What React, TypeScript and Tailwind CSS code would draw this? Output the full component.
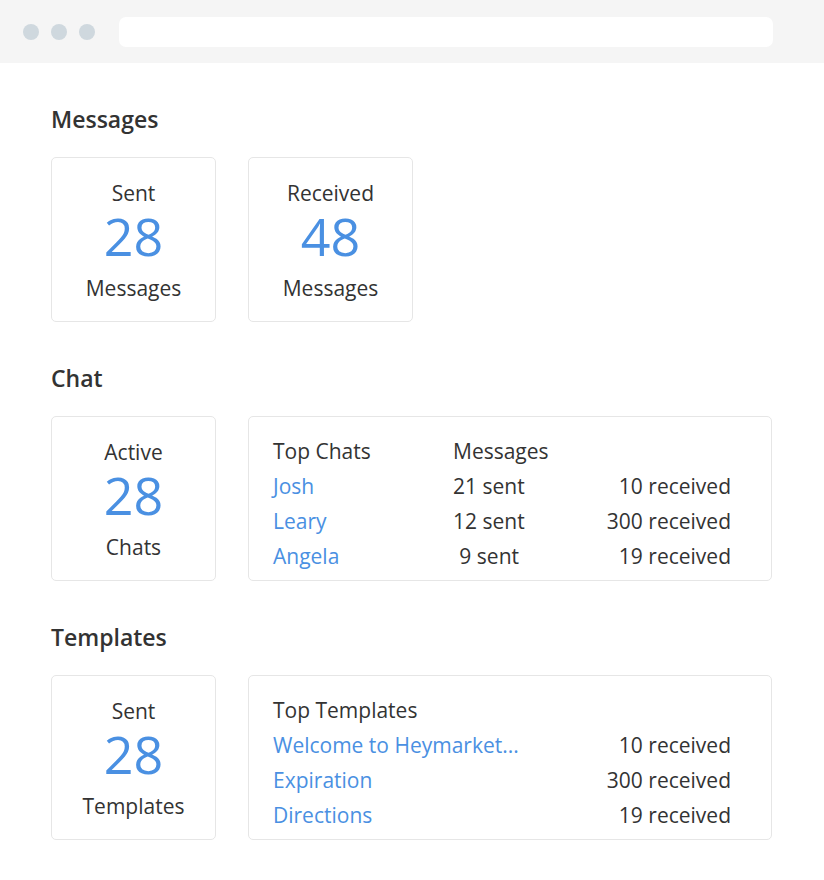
import React from 'react';

const font = { fontFamily: '"Open Sans", "Liberation Sans", sans-serif' };

const StatCard = ({ top, value, bottom }: { top: string; value: number; bottom: string }) => (
  <div className="w-[165px] h-[165px] border border-[#e6e6e6] rounded-[5px] flex flex-col items-center pt-[20px] text-[#333]">
    <div className="text-[21px] leading-[30px]">{top}</div>
    <div className="text-[52px] leading-[60px] text-[#4a90e2] -mt-[2px]">{value}</div>
    <div className="text-[21px] leading-[40px] mt-[2px]">{bottom}</div>
  </div>
);

const chats = [
  { name: 'Josh', sent: 21, received: 10 },
  { name: 'Leary', sent: 12, received: 300 },
  { name: 'Angela', sent: 9, received: 19 },
];

const templates = [
  { name: 'Welcome to Heymarket...', received: 10 },
  { name: 'Expiration', received: 300 },
  { name: 'Directions', received: 19 },
];

const Section = ({ title, children }: { title: string; children: React.ReactNode }) => (
  <section>
    <h2 className="text-[23px] leading-[30px] font-semibold text-[#333] mb-[23px]">{title}</h2>
    <div className="flex gap-[32px]">{children}</div>
  </section>
);

export default function App() {
  return (
    <div className="w-[824px] min-h-[880px] bg-white" style={font}>
      <div className="h-[63px] bg-[#f5f5f5] flex items-center">
        <div className="flex gap-[12px] ml-[23px]">
          <span className="w-[16px] h-[16px] rounded-full bg-[#cfd8de]" />
          <span className="w-[16px] h-[16px] rounded-full bg-[#cfd8de]" />
          <span className="w-[16px] h-[16px] rounded-full bg-[#cfd8de]" />
        </div>
        <div className="ml-[24px] w-[654px] h-[30px] bg-white rounded-[7px]" />
      </div>

      <div className="pl-[51px] pt-[41px] flex flex-col gap-[41px]">
        <Section title="Messages">
          <StatCard top="Sent" value={28} bottom="Messages" />
          <StatCard top="Received" value={48} bottom="Messages" />
        </Section>

        <Section title="Chat">
          <StatCard top="Active" value={28} bottom="Chats" />
          <div className="w-[524px] h-[165px] border border-[#e6e6e6] rounded-[5px] pl-[24px] pr-[40px] pt-[17px] text-[21px] leading-[35px] text-[#333]">
            <div className="grid grid-cols-[180px_66px_1fr]">
              <div>Top Chats</div>
              <div className="whitespace-nowrap">Messages</div>
              <div />
              {chats.map((c) => (
                <React.Fragment key={c.name}>
                  <div className="text-[#4a90e2]">{c.name}</div>
                  <div className="text-right whitespace-nowrap">{c.sent} sent</div>
                  <div className="text-right">{c.received} received</div>
                </React.Fragment>
              ))}
            </div>
          </div>
        </Section>

        <Section title="Templates">
          <StatCard top="Sent" value={28} bottom="Templates" />
          <div className="w-[524px] h-[165px] border border-[#e6e6e6] rounded-[5px] pl-[24px] pr-[40px] pt-[17px] text-[21px] leading-[35px] text-[#333]">
            <div>Top Templates</div>
            {templates.map((t) => (
              <div key={t.name} className="flex justify-between">
                <span className="text-[#4a90e2]">{t.name}</span>
                <span>{t.received} received</span>
              </div>
            ))}
          </div>
        </Section>
      </div>
    </div>
  );
}
